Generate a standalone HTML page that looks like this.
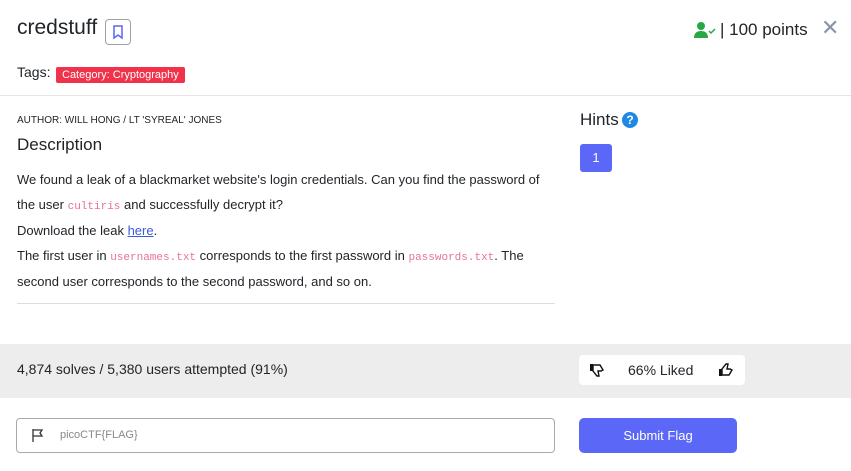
<!DOCTYPE html><html><head><style>
body{margin:0;width:851px;height:471px;background:#fff;font-family:"Liberation Sans",sans-serif;color:#212529;position:relative;overflow:hidden}
.a{position:absolute;white-space:nowrap}
code{font-family:"Liberation Mono",monospace;color:#e5739a;font-size:11px}
p{margin:0}
</style></head><body>
<div class="a" style="left:17px;top:16px;font-size:21px">credstuff</div>
<div class="a" style="left:105px;top:19px;width:24px;height:24px;border:1px solid #9aa3ad;border-radius:4px"><svg width="24" height="24" viewBox="0 0 24 24"><path d="M8 6h8v12l-4-3-4 3z" fill="none" stroke="#5a67f2" stroke-width="1.5"/></svg></div>
<div class="a" style="left:17px;top:64px;font-size:14px">Tags:</div>
<div class="a" style="left:56px;top:67px;height:16px;padding:0 6px;background:#f0324a;color:#fff;font-size:11px;line-height:16px;border-radius:2px">Category: Cryptography</div>
<svg class="a" style="left:693px;top:21px" width="24" height="18" viewBox="0 0 24 18"><circle cx="8" cy="5" r="4" fill="#28a745"/><path d="M1 17c0-5 3-7 7-7s7 2 7 7z" fill="#28a745"/><path d="M16 10l2 2 4-4" stroke="#28a745" stroke-width="1.5" fill="none"/></svg>
<div class="a" style="left:720px;top:20px;font-size:17px">| 100 points</div>
<div class="a" style="left:821px;top:15px;font-size:22px;color:#8a93a8">✕</div>
<div class="a" style="left:0;top:95px;width:851px;height:1px;background:#e5e5e5"></div>
<div class="a" style="left:17px;top:115px;font-size:10px">AUTHOR: WILL HONG / LT 'SYREAL' JONES</div>
<div class="a" style="left:17px;top:135px;font-size:17px">Description</div>
<div class="a" style="left:17px;top:168px;font-size:13px;line-height:24.5px;white-space:normal;width:542px">
<p>We found a leak of a blackmarket website's login credentials. Can you find the password of the user <code>cultiris</code> and successfully decrypt it?</p>
<p>Download the leak <span style="color:#3b5bdb;text-decoration:underline">here</span>.</p>
<p>The first user in <code>usernames.txt</code> corresponds to the first password in <code>passwords.txt</code>. The second user corresponds to the second password, and so on.</p></div>
<div class="a" style="left:17px;top:303px;width:538px;height:1px;background:#ddd"></div>
<div class="a" style="left:580px;top:110px;font-size:17px">Hints</div>
<div class="a" style="left:622px;top:112px;width:16px;height:16px;border-radius:50%;background:#1e88e5;color:#fff;font-size:12px;font-weight:bold;text-align:center;line-height:16px">?</div>
<div class="a" style="left:580px;top:144px;width:32px;height:28px;border-radius:3px;background:#5b67f6;color:#fff;font-size:13px;text-align:center;line-height:28px">1</div>
<div class="a" style="left:0;top:344px;width:851px;height:54px;background:#ededed"></div>
<div class="a" style="left:17px;top:361px;font-size:14px">4,874 solves / 5,380 users attempted (91%)</div>
<div class="a" style="left:579px;top:355px;width:166px;height:30px;background:#fff;border-radius:4px"></div>
<svg class="a" style="left:589px;top:362px" width="16" height="16" viewBox="0 0 16 16"><rect x="1" y="2" width="3" height="7" fill="#111"/><path d="M4 3h7l3 5-2 1H9l1 5-2 0-4-5z" fill="none" stroke="#111" stroke-width="1.4"/></svg>
<div class="a" style="left:628px;top:362px;font-size:14px">66% Liked</div>
<svg class="a" style="left:718px;top:362px" width="16" height="16" viewBox="0 0 16 16"><rect x="1" y="7" width="3" height="7" fill="#111"/><path d="M4 13h7l3-5-2-1H9l1-5-2 0-4 5z" fill="none" stroke="#111" stroke-width="1.4"/></svg>
<div class="a" style="left:16px;top:418px;width:537px;height:33px;border:1px solid #aaa;border-radius:4px"></div>
<svg class="a" style="left:31px;top:428px" width="14" height="14" viewBox="0 0 14 14"><path d="M2 1v13M2 2h9l-2 3 2 3H2" fill="none" stroke="#333" stroke-width="1.3"/></svg>
<div class="a" style="left:60px;top:429px;font-size:11px;color:#888">picoCTF{FLAG}</div>
<div class="a" style="left:579px;top:418px;width:158px;height:35px;background:#5b67f6;border-radius:5px;color:#fff;font-size:13px;text-align:center;line-height:35px">Submit Flag</div>
</body></html>
